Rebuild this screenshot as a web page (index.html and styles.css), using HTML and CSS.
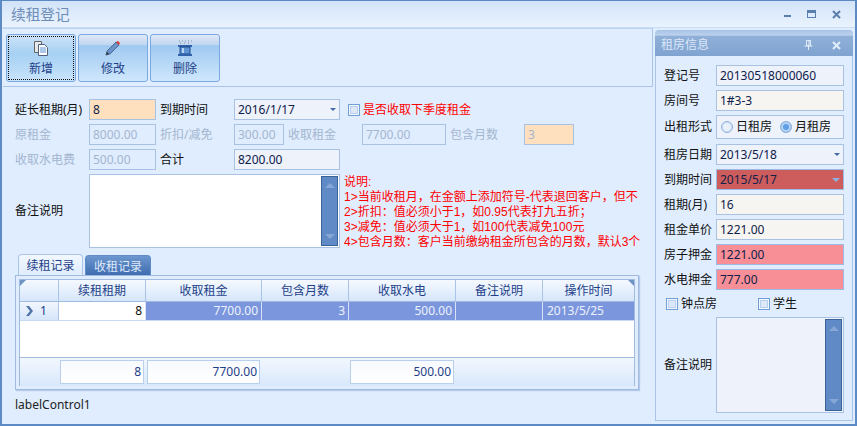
FILE: index.html
```html
<!DOCTYPE html>
<html lang="zh">
<head>
<meta charset="utf-8">
<title>续租登记</title>
<link rel="stylesheet" href="styles.css">
</head>
<body>
<div class="window">
  <header class="titlebar">
    <span class="title">续租登记</span>
    <div class="winbtns">
      <svg width="9" height="9" viewBox="0 0 9 9"><rect x="1" y="5" width="7" height="2" fill="#5a7fae"/></svg>
      <svg width="10" height="9" viewBox="0 0 10 9"><rect x=".5" y=".5" width="8" height="7" fill="none" stroke="#5a7fae"/><rect x="1" y="1" width="7" height="2" fill="#5a7fae"/></svg>
      <svg width="10" height="9" viewBox="0 0 10 9"><path d="M1 1l7 7M8 1L1 8" stroke="#5a7fae" stroke-width="2"/></svg>
    </div>
  </header>
  <div class="main">
    <div class="left">
      <div class="toolbar">
        <button class="tbtn focus"><span class="tinner">
          <svg width="16" height="16" viewBox="0 0 16 16"><path d="M1.5 1.500h7v11h-7z" fill="#e8e8e8" stroke="#666"/><path d="M5.500 4.500h6l3 3v8h-9z" fill="#fff" stroke="#50607a"/><path d="M7 8h6M7 10h6M7 12h6" stroke="#5c93d6"/></svg>
          <span>新增</span></span></button>
        <button class="tbtn"><span class="tinner">
          <svg width="16" height="16" viewBox="0 0 16 16"><path d="M1 15l1-4 9-9 3 3-9 9z" fill="#6c93c8" stroke="#3c5a88" stroke-width=".8"/><path d="M11 2l2-1 2 2-1 2z" fill="#e23b2e"/><path d="M1 15l1-3 2 2z" fill="#333"/></svg>
          <span>修改</span></span></button>
        <button class="tbtn"><span class="tinner">
          <svg width="16" height="16" viewBox="0 0 16 16"><path d="M2 1h1M5 1h1M8 1h1M11 1h1M14 1h1M3 3h1M7 3h1M11 3h1" stroke="#7b8ea8"/><path d="M1 5h14v2H1z" fill="#2f62a8"/><path d="M3 7h10v7H3z" fill="#5f93d6" stroke="#1f4c8c"/><path d="M6 8v5" stroke="#b9d5f5" stroke-width="2"/><path d="M1 14h14v2H1z" fill="#2f62a8"/></svg>
          <span>删除</span></span></button>
      </div>
      <div class="form">
        <div class="row">
          <label class="lbl first">延长租期(月)</label>
          <div class="field w67 orange">8</div>
          <label class="lbl mid">到期时间</label>
          <div class="field w106 soft date">2016/1/17<i class="caret"></i></div>
          <span class="check red-check"><i class="box"></i>是否收取下季度租金</span>
        </div>
        <div class="row">
          <label class="lbl first off">原租金</label>
          <div class="field w67 off">8000.00</div>
          <label class="lbl mid off">折扣/减免</label>
          <div class="field w50 off">300.00</div>
          <label class="lbl mid off">收取租金</label>
          <div class="field w84 off">7700.00</div>
          <label class="lbl mid off">包含月数</label>
          <div class="field w50 off orange">3</div>
        </div>
        <div class="row">
          <label class="lbl first off">收取水电费</label>
          <div class="field w67 off">500.00</div>
          <label class="lbl mid">合计</label>
          <div class="field w106 soft">8200.00</div>
        </div>
        <div class="memo-row">
          <label class="lbl first">备注说明</label>
          <div class="memo">
            <div class="scroll"><i class="up"></i><i class="down"></i></div>
          </div>
          <div class="notes">
            <div>说明:</div>
            <div>1&gt;当前收租月，在金额上添加符号-代表退回客户，但不</div>
            <div>2&gt;折扣：值必须小于1，如0.95代表打九五折；</div>
            <div>3&gt;减免：值必须大于1，如100代表减免100元</div>
            <div>4&gt;包含月数：客户当前缴纳租金所包含的月数，默认3个</div>
          </div>
        </div>
        <div class="tabs">
          <span class="tab active">续租记录</span>
          <span class="tab">收租记录</span>
        </div>
        <div class="gridbox">
          <div class="grid">
            <div class="ghead">
              <div class="hc corner-l"></div>
              <div class="hc">续租租期</div>
              <div class="hc">收取租金</div>
              <div class="hc">包含月数</div>
              <div class="hc">收取水电</div>
              <div class="hc">备注说明</div>
              <div class="hc corner-r">操作时间</div>
            </div>
            <div class="grow">
              <div class="ind"><svg width="9" height="10" viewBox="0 0 9 10"><path d="M1 0l3 0 4 5-4 5-3 0 4-5z" fill="#4f74a8"/></svg><span>1</span></div>
              <div class="dc edit">8</div>
              <div class="dc">7700.00</div>
              <div class="dc">3</div>
              <div class="dc">500.00</div>
              <div class="dc"></div>
              <div class="dc la">2013/5/25</div>
            </div>
            <div class="gblank"></div>
            <div class="gfoot">
              <div class="fc empty"></div>
              <div class="fc">8</div>
              <div class="fc">7700.00</div>
              <div class="fc empty"></div>
              <div class="fc">500.00</div>
              <div class="fc empty"></div>
              <div class="fc empty"></div>
            </div>
          </div>
        </div>
        <div class="status">labelControl1</div>
      </div>
    </div>
    <aside class="dock">
      <div class="dock-title">
        <span>租房信息</span>
        <div class="dock-btns">
          <svg width="9" height="10" viewBox="0 0 9 10"><path d="M2.500 .5h4v5h-4zM.5 6h8M4.500 6v4M5 1v4" stroke="#e4eefb" fill="none"/></svg>
          <svg width="9" height="9" viewBox="0 0 9 9"><path d="M1 1l7 7M8 1L1 8" stroke="#e4eefb" stroke-width="2"/></svg>
        </div>
      </div>
      <div class="dock-body">
        <div class="drow"><label class="dl">登记号</label><div class="field dw soft">20130518000060</div></div>
        <div class="drow"><label class="dl">房间号</label><div class="field dw beige">1#3-3</div></div>
        <div class="drow tall"><label class="dl">出租形式</label>
          <div class="field dw soft radios">
            <span class="radio"><i class="dot"></i>日租房</span>
            <span class="radio"><i class="dot on"></i>月租房</span>
          </div>
        </div>
        <div class="drow"><label class="dl">租房日期</label><div class="field dw soft date">2013/5/18<i class="caret"></i></div></div>
        <div class="drow"><label class="dl">到期时间</label><div class="field dw crimson date">2015/5/17<i class="caret light"></i></div></div>
        <div class="drow"><label class="dl">租期(月)</label><div class="field dw beige">16</div></div>
        <div class="drow"><label class="dl">租金单价</label><div class="field dw beige">1221.00</div></div>
        <div class="drow"><label class="dl">房子押金</label><div class="field dw pink">1221.00</div></div>
        <div class="drow"><label class="dl">水电押金</label><div class="field dw pink">777.00</div></div>
        <div class="dchecks">
          <span class="check c1"><i class="box"></i>钟点房</span>
          <span class="check"><i class="box"></i>学生</span>
        </div>
        <div class="dmemo-row">
          <label class="dl">备注说明</label>
          <div class="dmemo"><div class="scroll"><i class="up"></i><i class="down"></i></div></div>
        </div>
      </div>
    </aside>
  </div>
</div>
</body>
</html>
```
FILE: styles.css
```css
* { box-sizing: border-box; }
html, body { margin: 0; padding: 0; }
body {
  width: 857px;
  height: 426px;
  overflow: hidden;
  font: 12px/16px "Noto Sans", "Noto Sans CJK SC", sans-serif;
  color: #111;
}
.window {
  width: 857px;
  height: 426px;
  display: flex;
  flex-direction: column;
  background: #e0edfe;
  border: 1px solid #5b8ac4;
  border-width: 1px 2px 2px 2px;
}
.titlebar {
  height: 27px;
  flex: none;
  display: flex;
  align-items: center;
  justify-content: space-between;
  padding: 0 13px 0 9px;
  background: linear-gradient(#d2e3f8, #eaf3fe);
  border-bottom: 1px solid #c7dcf5;
}
.title { font-size: 14.67px; color: #6d8db8; }
.winbtns { display: flex; gap: 15px; align-items: center; }
.main { flex: 1; display: flex; min-height: 0; }
.left { width: 651px; flex: none; display: flex; flex-direction: column; }
.toolbar {
  height: 59px;
  flex: none;
  display: flex;
  gap: 2px;
  padding: 5px 0 0 3px;
  margin-left: 1px;
  border-bottom: 1px solid #a9c4e6;
  border-right: 1px solid #a9c4e6;
  border-top: 1px solid #bcd4f2;
}
.tbtn {
  width: 70px;
  height: 48px;
  padding: 1px;
  border: 1px solid #7aa8e0;
  border-radius: 3px;
  font: inherit;
  color: #1e3f88;
  background: linear-gradient(#dfe9f8 0, #c0d5ef 22%, #9fc9f0 23%, #cfe7fd 100%);
}
.tinner {
  display: flex;
  flex-direction: column;
  align-items: center;
  height: 100%;
  padding-top: 3px;
  gap: 5px;
  border: 1px solid transparent;
}
.focus { background: linear-gradient(#cfe3f8, #a6d0f3 40%, #c8e4fb); }
.focus .tinner { border: 1px dotted #111; }
.form { flex: 1; padding-top: 12px; display: flex; flex-direction: column; }
.row { height: 21px; display: flex; align-items: center; margin-bottom: 4px; }
.lbl { width: 74px; flex: none; white-space: nowrap; }
.lbl.first { margin-left: 13px; }
.lbl.mid { margin-left: 4px; }
.off { color: #a3b6d0; }
.field {
  height: 21px;
  flex: none;
  padding: 0 4px 0 3px;
  line-height: 19px;
  border: 1px solid #a9c2e2;
  white-space: nowrap;
  color: #10204a;
}
.field.off { color: #a3b6d0; }
.w67 { width: 67px; }
.w50 { width: 50px; }
.w84 { width: 84px; }
.w106 { width: 106px; }
.orange { background: #fee0bf; }
.soft { background: #edf2fb; }
.beige { background: #f6f5f1; }
.pink { background: #f88f96; border-color: #9dbbe2; }
.crimson { background: #cd5c5c; border-color: #9dbbe2; }
.date { display: flex; align-items: center; justify-content: space-between; padding-right: 3px; }
.caret {
  width: 0;
  height: 0;
  border: 3px solid transparent;
  border-top: 3px solid #3f6ca8;
  border-bottom: 0;
}
.caret.light { border-width: 4px 4px 0; border-top-color: #8fb0dc; }
.check { display: flex; align-items: center; gap: 3px; white-space: nowrap; }
.box {
  width: 12px;
  height: 12px;
  flex: none;
  border: 1px solid #6f9fd8;
  background: #dde9f8;
  box-shadow: inset 0 0 0 1px #f4f8fe, inset 0 0 0 2px #b9d0ec;
}
.red-check { margin-left: 8px; color: #f00; }
.memo-row { display: flex; align-items: center; height: 74px; margin-bottom: 6px; }
.memo {
  width: 251px;
  height: 74px;
  flex: none;
  display: flex;
  justify-content: flex-end;
  background: #fff;
  border: 1px solid #a9c2e2;
  padding: 1px;
}
.scroll {
  width: 17px;
  height: 100%;
  display: flex;
  flex-direction: column;
  justify-content: space-between;
  align-items: center;
  padding: 6px 0;
  background: #5f8ac5;
  border: 1px solid #3a6398;
}
.scroll .up, .scroll .down {
  width: 0;
  height: 0;
  border: 5px solid transparent;
}
.scroll .up { border-bottom: 5px solid #86a6d6; border-top: 0; }
.scroll .down { border-top: 5px solid #86a6d6; border-bottom: 0; }
.notes {
  width: 298px;
  margin: 1px 0 0 4px;
  align-self: flex-start;
  height: 75px;
  overflow: hidden;
  color: #f00;
  font-family: "Liberation Sans", "Noto Sans CJK SC", sans-serif;
  line-height: 15px;
  white-space: nowrap;
}
.tabs { display: flex; height: 21px; margin-left: 16px; gap: 2px; align-items: flex-end; flex: none; }
.tab {
  width: 66px;
  height: 20px;
  text-align: center;
  line-height: 21px;
  color: #dfeafa;
  border-radius: 4px 4px 0 0;
  background: linear-gradient(#6c96ce, #3f6db0);
  border: 1px solid #5f8cc8;
  border-bottom: 0;
}
.tab.active {
  width: 65px;
  height: 21px;
  color: #1e3f88;
  background: linear-gradient(#f2f7fe, #e0edfe);
  border-color: #a9c4e6;
}
.gridbox {
  margin-left: 13px;
  width: 624px;
  height: 115px;
  flex: none;
  padding: 3px;
  border: 1px solid #a0bbdf;
  box-shadow: 1px 1px 1px #b3cae8;
}
.grid {
  height: 107px;
  border: 1px solid #a0bbdf;
  display: flex;
  flex-direction: column;
  background: #fff;
}
.ghead, .grow, .gfoot {
  display: grid;
  grid-template-columns: 39px 87px 116px 87px 107px 87px 1fr;
  flex: none;
}
.ghead { height: 22px; background: linear-gradient(#f5f9ff, #d6e6fa); border-bottom: 1px solid #a0bbdf; }
.hc {
  text-align: center;
  line-height: 22px;
  color: #1e3f88;
  border-right: 1px solid #a9c4e6;
  position: relative;
}
.hc:last-child { border-right: 0; }
.corner-l::before {
  content: "";
  position: absolute;
  left: 0;
  top: 0;
  border: 3px solid transparent;
  border-top-color: #6f94c4;
  border-left-color: #6f94c4;
}
.corner-r::after {
  content: "";
  position: absolute;
  right: 0;
  top: 0;
  border: 3px solid transparent;
  border-top-color: #6f94c4;
  border-right-color: #6f94c4;
}
.grow { height: 19px; background: #7b96dc; border-bottom: 1px solid #c8daf2; }
.ind {
  display: flex;
  align-items: center;
  gap: 6px;
  padding-left: 5px;
  color: #1e3f88;
  background: linear-gradient(#f1f6fe, #d6e6fa);
  border-right: 1px solid #a9c4e6;
}
.dc {
  text-align: right;
  line-height: 18px;
  padding-right: 3px;
  color: #ecf2fd;
  border-right: 1px solid #d6e2f7;
}
.dc:last-child { border-right: 0; }
.dc.la { text-align: left; padding: 0 0 0 4px; }
.dc.edit { background: #fff; color: #111; }
.gblank { height: 36px; flex: none; }
.gfoot {
  flex: 1;
  background: linear-gradient(#f2f7fe, #d8e8fb);
  border-top: 1px solid #a0bbdf;
  padding-top: 1px;
  padding-bottom: 1px;
}
.fc {
  margin: 1px 2px 1px 1px;
  background: linear-gradient(#f7fafe, #fff);
  border: 1px solid #b9cfec;
  text-align: right;
  padding-right: 2px;
  line-height: 22px;
  color: #1e3f88;
}
.fc.empty { visibility: hidden; }
.status { margin: 7px 0 0 13px; line-height: 16px; color: #222; }
.dock {
  width: 198px;
  flex: none;
  margin: 2px 0 1px 2px;
  display: flex;
  flex-direction: column;
}
.dock-title {
  height: 26px;
  flex: none;
  display: flex;
  align-items: center;
  justify-content: space-between;
  padding: 4px 12px 0 6px;
  color: #dce8f8;
  border-radius: 4px 4px 0 0;
  background: linear-gradient(#a6c2e6 0, #bcd2ee 20%, #90b0d8 24%, #7fa3d0 100%);
}
.dock-btns { display: flex; gap: 19px; align-items: center; }
.dock-body {
  flex: 1;
  border: 1px solid #a9c4e6;
  border-top: 0;
  padding: 9px 0 0 8px;
  margin-bottom: 2px;
}
.drow { display: flex; align-items: center; height: 21px; margin-bottom: 4px; }
.drow.tall { height: 24px; margin-bottom: 5px; }
.dl { width: 52px; flex: none; white-space: nowrap; }
.dw { width: 128px; }
.tall .dw { height: 24px; line-height: 22px; }
.radios { display: flex; align-items: center; gap: 8px; padding-left: 4px; }
.radio { display: flex; align-items: center; gap: 3px; color: #111; }
.dot {
  width: 12px;
  height: 12px;
  border-radius: 50%;
  border: 1px solid #8fb2de;
  background: #e8f0fb;
  box-shadow: inset 0 0 0 1px #c8daf2;
}
.dot.on { background: #5f9fe6; box-shadow: inset 0 0 0 2px #b9d5f5; }
.dchecks { display: flex; height: 27px; align-items: center; margin: -4px 0 0 2px; }
.c1 { width: 92px; }
.dmemo-row { display: flex; align-items: center; height: 96px; }
.dmemo {
  width: 128px;
  height: 96px;
  display: flex;
  justify-content: flex-end;
  background: #edf2fb;
  border: 1px solid #a9c2e2;
  padding: 1px;
}
```
